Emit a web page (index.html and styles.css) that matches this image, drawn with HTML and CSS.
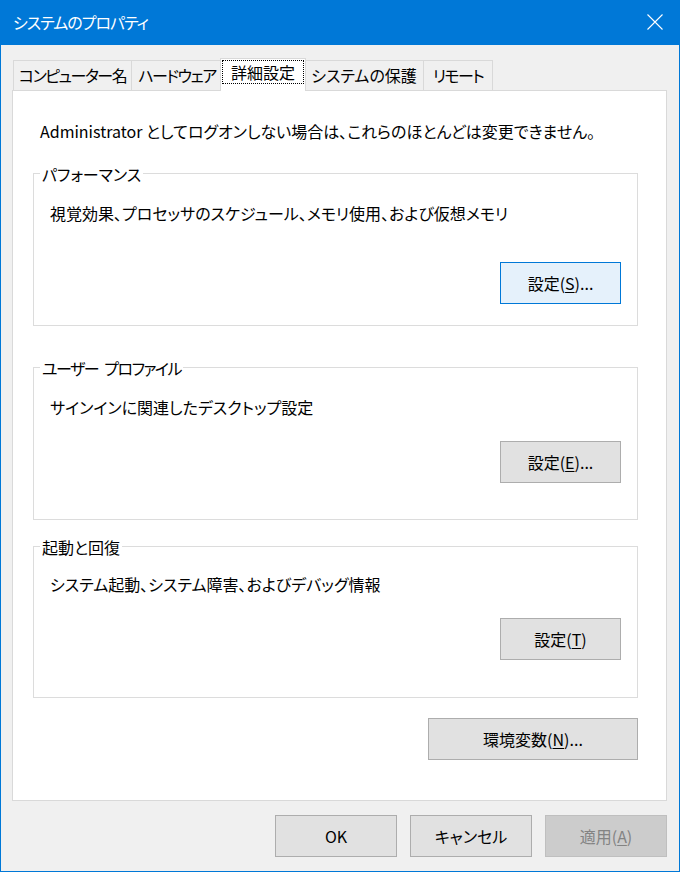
FILE: index.html
```html
<!DOCTYPE html>
<html lang="ja">
<head>
    <meta charset="UTF-8">
    <title>システムのプロパティ</title>
    <link rel="stylesheet" href="styles.css">
</head>
<body>
    <div class="window">
        <div class="titlebar">
            <span class="title">システムのプロパティ</span>
            <svg class="close" width="16" height="16" viewBox="0 0 16 16">
                <path d="M0.5 0.5 L15.5 15.5 M15.5 0.5 L0.5 15.5" stroke="#fff" stroke-width="1.1" fill="none"/>
            </svg>
        </div>
        <div class="client">
            <div class="tabs">
                <div class="tab tab-1 narrow">コンピューター名</div>
                <div class="tab tab-2 narrow">ハードウェア</div>
                <div class="tab tab-3 selected"><span class="focus">詳細設定</span></div>
                <div class="tab tab-4">システムの保護</div>
                <div class="tab tab-5 narrow">リモート</div>
            </div>
            <div class="panel">
                <p class="note">Administrator としてログオンしない場合は、これらのほとんどは変更できません。</p>

                <div class="group group-perf">
                    <div class="group-title">パフォーマンス</div>
                    <p class="desc">視覚効果、プロセッサのスケジュール、メモリ使用、および仮想メモリ</p>
                    <div class="actions">
                        <button class="btn hot">設定(<u>S</u>)...</button>
                    </div>
                </div>

                <div class="group group-profile">
                    <div class="group-title narrow">ユーザー プロファイル</div>
                    <p class="desc">サインインに関連したデスクトップ設定</p>
                    <div class="actions">
                        <button class="btn">設定(<u>E</u>)...</button>
                    </div>
                </div>

                <div class="group group-boot">
                    <div class="group-title">起動と回復</div>
                    <p class="desc">システム起動、システム障害、およびデバッグ情報</p>
                    <div class="actions">
                        <button class="btn">設定(<u>T</u>)</button>
                    </div>
                </div>

                <div class="env-row">
                    <button class="btn btn-env">環境変数(<u>N</u>)...</button>
                </div>
            </div>
            <div class="footer">
                <button class="btn btn-foot">OK</button>
                <button class="btn btn-foot">キャンセル</button>
                <button class="btn btn-foot disabled">適用(<u>A</u>)</button>
            </div>
        </div>
    </div>
</body>
</html>
```

FILE: styles.css
```css
* {
    box-sizing: border-box;
}

body {
    margin: 0;
    background: #f0f0f0;
    font-family: "Noto Sans CJK JP", "Noto Sans", sans-serif;
    font-size: 16px;
    font-feature-settings: "palt";
    color: #000;
}

.window {
    width: 680px;
    height: 872px;
    border: 1px solid #0078d7;
    border-top: none;
    display: flex;
    flex-direction: column;
}

.titlebar {
    height: 45px;
    margin: 0 -1px;
    background: #0078d7;
    color: #fff;
    display: flex;
    align-items: center;
    justify-content: space-between;
    padding: 0 17px 1px 13px;
}

.title {
    font-size: 16px;
    line-height: 20px;
    letter-spacing: -1px;
}

.close {
    display: block;
}

.narrow {
    letter-spacing: -1.5px;
}

.client {
    flex: 1;
    background: #f0f0f0;
    padding: 13px 12px 0 11px;
}

/* tabs */
.tabs {
    display: flex;
    align-items: flex-end;
    padding-left: 1px;
    height: 32px;
}

.tab {
    height: 30px;
    border: 1px solid #d9d9d9;
    border-right: none;
    border-bottom: none;
    background: #f0f0f0;
    text-align: center;
    line-height: 28px;
    white-space: nowrap;
}

.tab-1 { width: 118px; }
.tab-2 { width: 91px; }
.tab-4 { width: 119px; }
.tab-5 { width: 70px; border-right: 1px solid #d9d9d9; }

.tab.selected {
    position: relative;
    z-index: 1;
    width: 86px;
    height: 33px;
    margin: 0 -2px -1px -2px;
    background: #fff;
    border-right: 1px solid #d9d9d9;
    padding: 1px 1px 0 1px;
    line-height: 23px;
}

.tab-4 {
    border-left: none;
    padding-left: 1px;
}

.focus {
    display: block;
    height: 24px;
    border: 1px dotted #000;
}

/* panel */
.panel {
    height: 711px;
    background: #fff;
    border: 1px solid #d9d9d9;
    padding: 30px 28px 0 20px;
}

.note {
    margin: 0 0 0 7px;
    line-height: 20px;
}

.group {
    border: 1px solid #dcdcdc;
    height: 153px;
    margin-top: 41px;
}

.group-perf {
    margin-top: 32px;
}

.group-boot {
    margin-top: 26px;
    height: 152px;
}

.group-title {
    width: fit-content;
    margin: -10px 0 0 6px;
    padding: 0 2px;
    line-height: 20px;
    background: #fff;
}

.group-profile .group-title {
    word-spacing: 4px;
}

.desc {
    margin: 19px 0 0 16px;
    line-height: 20px;
}

.group-boot .desc {
    margin-top: 17px;
}

.actions {
    display: flex;
    justify-content: flex-end;
    padding-right: 16px;
    margin-top: 24px;
}

.group-perf .actions {
    margin-top: 39px;
}

.btn {
    font-family: inherit;
    font-size: 16px;
    font-feature-settings: "palt";
    color: #000;
    width: 121px;
    height: 42px;
    background: #e1e1e1;
    border: 1px solid #adadad;
    padding: 0;
    line-height: 20px;
}

.btn u {
    text-underline-offset: 2px;
}

.btn.hot {
    background: #e5f1fb;
    border-color: #0078d7;
}

.env-row {
    display: flex;
    justify-content: flex-end;
    margin-top: 20px;
}

.btn-env {
    width: 210px;
}

.footer {
    display: flex;
    justify-content: flex-end;
    gap: 13px;
    margin-top: 14px;
}

.btn-foot {
    width: 122px;
}

.btn.disabled {
    background: #cccccc;
    border-color: #bfbfbf;
    color: #838383;
}
```
